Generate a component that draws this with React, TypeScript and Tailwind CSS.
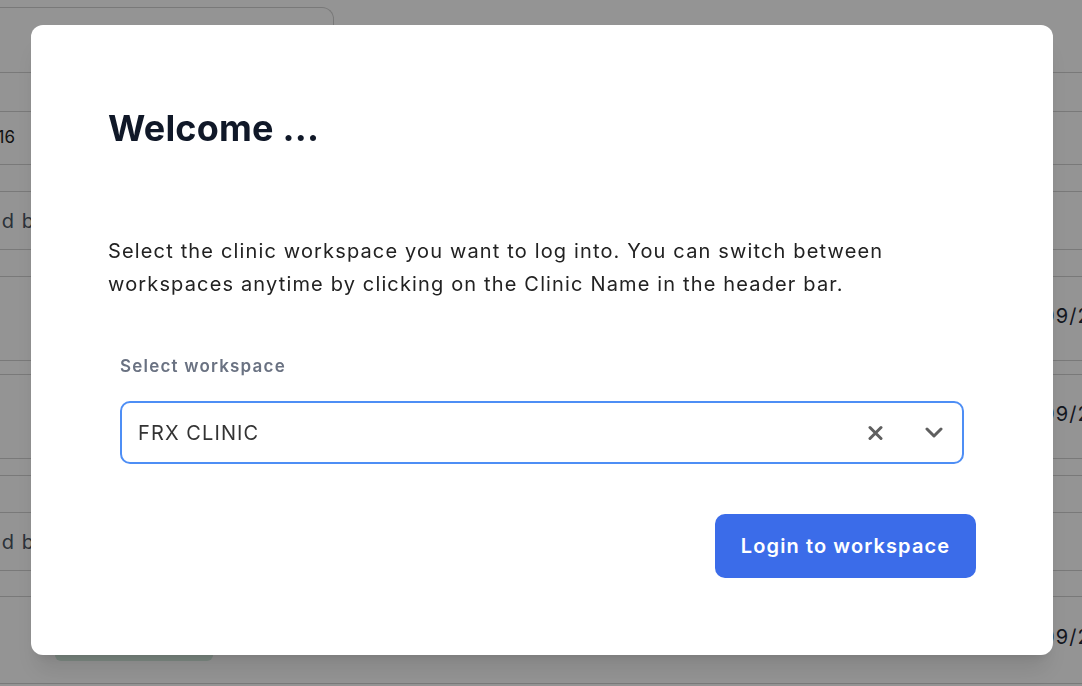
import { useState } from "react";

type Band = { h: number; left?: string; leftW?: number; right?: string; badge?: boolean };

// rows of the list page sitting behind the dialog
const bands: Band[] = [
  { h: 73 },
  { h: 39 },
  { h: 53, left: "2016", leftW: 15 },
  { h: 27 },
  { h: 58, left: "Created by", leftW: 47 },
  { h: 27 },
  { h: 84, right: "09/2024" },
  { h: 14 },
  { h: 84, right: "09/2024" },
  { h: 17 },
  { h: 37 },
  { h: 58, left: "Created by", leftW: 47 },
  { h: 26 },
  { h: 87, right: "09/2024", badge: true },
];

const BackgroundPage = () => (
  <div className="relative h-[686px] w-full overflow-hidden bg-white font-['Inter',sans-serif]">
    {bands.map((b, i) => (
      <div
        key={i}
        className="flex items-center border-b border-[#d1d1d1]"
        style={{ height: b.h }}
      >
        {i === 0 && (
          <div className="-ml-[20px] mt-[7px] h-[65px] w-[354px] self-start rounded-t-xl border border-b-0 border-[#d1d1d1]" />
        )}
        {b.left && (
          <div
            className={`flex justify-end overflow-hidden whitespace-nowrap ${b.left === "2016" ? "text-[17px] text-[#222]" : "text-[20px] tracking-[1.1px] text-[#4b5563]"}`}
            style={{ width: b.leftW }}
          >
            {b.left}
          </div>
        )}
        {b.badge && (
          <div className="ml-[55px] mt-[18px] h-[24px] w-[158px] rounded-md bg-[#d5ebdf]" />
        )}
        {b.right && (
          <div className="ml-auto -mt-[6px] w-[40px] overflow-hidden whitespace-nowrap text-[20px] tracking-[1.1px] text-[#1f2937]">
            {b.right}
          </div>
        )}
      </div>
    ))}
  </div>
);

const WorkspaceModal = () => {
  const [workspace, setWorkspace] = useState("FRX CLINIC");

  return (
    <div className="fixed inset-0 flex items-start bg-black/[0.42] pl-[31px] pt-[25px] font-['Inter',sans-serif]">
      <div className="flex h-[630px] w-[1022px] flex-col rounded-[12px] bg-white px-[77px] pb-[77px] pt-[83px] shadow-xl">
        <h1 className="text-4xl font-bold leading-10 tracking-[0.2px] text-gray-900">Welcome ...</h1>
        <p className="mt-[87px] text-[20px] leading-[33px] tracking-[1.15px] text-[#222]">
          Select the clinic workspace you want to log into. You can switch between
          workspaces anytime by clicking on the Clinic Name in the header bar.
        </p>
        <div className="mx-3 mt-[53px]">
          <label className="block text-[17px] font-semibold leading-6 tracking-[1.2px] text-gray-500">
            Select workspace
          </label>
          <div className="mt-[23px] flex h-[63px] items-center rounded-[10px] border-2 border-[#4e8ef5] pl-4 pr-[19px]">
            <span className="flex-1 text-[20px] tracking-[1.1px] text-[#333]">{workspace}</span>
            <button onClick={() => setWorkspace("")} className="flex h-4 w-4 items-center justify-center">
              <svg width="15" height="16" viewBox="0 0 15 16" fill="none" stroke="#5f5f5f" strokeWidth="3" strokeLinecap="round">
                <path d="M2 2.5 13 13.5M13 2.5 2 13.5" />
              </svg>
            </button>
            <div className="ml-[42px] flex items-center">
              <svg width="18" height="11" viewBox="0 0 18 11" fill="none" stroke="#5f5f5f" strokeWidth="3" strokeLinecap="round" strokeLinejoin="round">
                <path d="M2 2l7 7 7-7" />
              </svg>
            </div>
          </div>
        </div>
        <button className="mt-[50px] h-[64px] w-[261px] self-end rounded-[10px] bg-[#3b6ce9] text-[20px] font-semibold tracking-[1.1px] text-white">
          Login to workspace
        </button>
      </div>
    </div>
  );
};

export default function App() {
  return (
    <div className="relative">
      <BackgroundPage />
      <WorkspaceModal />
    </div>
  );
}
